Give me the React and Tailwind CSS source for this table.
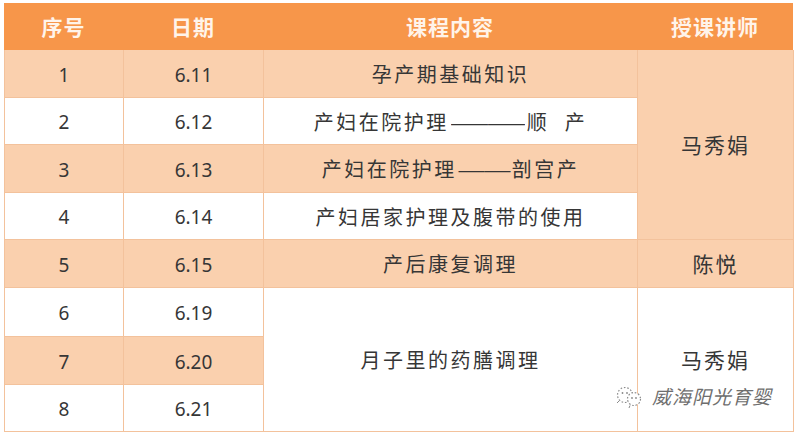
import React from "react";

const rows = [
  { n: "1", d: "6.11" },
  { n: "2", d: "6.12" },
  { n: "3", d: "6.13" },
  { n: "4", d: "6.14" },
  { n: "5", d: "6.15" },
  { n: "6", d: "6.19" },
  { n: "7", d: "6.20" },
  { n: "8", d: "6.21" },
];

const rowStart = [
  "row-start-1",
  "row-start-2",
  "row-start-3",
  "row-start-4",
  "row-start-5",
  "row-start-6",
  "row-start-7",
  "row-start-8",
];

const cellBase =
  "flex items-center justify-center pt-[3px] border-r border-b border-[#f3c29c] text-[#363636]";
const course = "text-[20px] tracking-[2.5px]";
const teacher = "text-[21px] tracking-[2px]";

function bg(i) {
  return i % 2 === 0 ? "bg-[#fad0ae]" : "bg-white";
}

function Logo() {
  return (
    <svg width="32" height="24" viewBox="0 0 32 24" fill="none">
      <circle cx="11" cy="10" r="7.5" stroke="#8a8a8a" strokeWidth="1.2" strokeDasharray="1.6 1.8" />
      <circle cx="20" cy="14" r="6.5" stroke="#8a8a8a" strokeWidth="1.2" strokeDasharray="1.6 1.8" fill="white" />
      <circle cx="18" cy="13" r="0.9" fill="#8a8a8a" />
      <circle cx="22" cy="13" r="0.9" fill="#8a8a8a" />
      <circle cx="8.5" cy="8" r="0.9" fill="#8a8a8a" />
      <circle cx="13" cy="8" r="0.9" fill="#8a8a8a" />
      <path d="M16 20.5 L15 23" stroke="#8a8a8a" strokeWidth="1" />
      <path d="M5 16 L3 18" stroke="#8a8a8a" strokeWidth="1" />
    </svg>
  );
}

export default function App() {
  return (
    <div className="w-[800px] h-[435px] bg-white pt-[3px] pl-[4px] font-['Noto_Sans','Noto_Sans_CJK_SC',sans-serif]">
      <div className="relative w-[789px]">
        {/* header */}
        <div className="grid grid-cols-[119px_140px_374px_156px] h-[47px] bg-[#f7964a] text-[#fff4ea] text-[21px] font-semibold tracking-[1px] font-['Noto_Sans_CJK_SC',sans-serif]">
          <div className="flex items-center justify-center">序号</div>
          <div className="flex items-center justify-center">日期</div>
          <div className="flex items-center justify-center">课程内容</div>
          <div className="flex items-center justify-center">授课讲师</div>
        </div>
        {/* body */}
        <div className="grid grid-cols-[119px_140px_374px_156px] grid-rows-[48px_47px_48px_47px_48px_49px_48px_47px] border-l border-[#f3c29c]">
          {rows.map((r, i) => (
            <React.Fragment key={r.n}>
              <div className={`${cellBase} ${bg(i)} ${rowStart[i]} col-start-1 text-[19px]`}>{r.n}</div>
              <div className={`${cellBase} ${bg(i)} ${rowStart[i]} col-start-2 text-[19px]`}>{r.d}</div>
            </React.Fragment>
          ))}
          <div className={`${cellBase} bg-[#fad0ae] row-start-1 col-start-3 ${course}`}>孕产期基础知识</div>
          <div className={`${cellBase} bg-white row-start-2 col-start-3 ${course}`}>
            产妇在院护理
            <span className="inline-block w-[78px] text-center tracking-[0px] scale-x-[1.85] font-['Liberation_Sans',sans-serif]">——</span>
            顺&nbsp;&nbsp;产
          </div>
          <div className={`${cellBase} bg-[#fad0ae] row-start-3 col-start-3 ${course}`}>
            产妇在院护理
            <span className="inline-block w-[55px] text-center tracking-[0px] scale-x-[1.3] font-['Liberation_Sans',sans-serif]">——</span>
            剖宫产
          </div>
          <div className={`${cellBase} bg-white row-start-4 col-start-3 ${course}`}>产妇居家护理及腹带的使用</div>
          <div className={`${cellBase} bg-[#fad0ae] row-start-5 col-start-3 ${course}`}>产后康复调理</div>
          <div className={`${cellBase} bg-white row-start-6 row-span-3 col-start-3 ${course}`}>月子里的药膳调理</div>
          <div className={`${cellBase} bg-[#fad0ae] row-start-1 row-span-4 col-start-4 ${teacher}`}>马秀娟</div>
          <div className={`${cellBase} bg-[#fad0ae] row-start-5 col-start-4 ${teacher}`}>陈悦</div>
          <div className={`${cellBase} bg-white row-start-6 row-span-3 col-start-4 ${teacher}`}>马秀娟</div>
        </div>
        {/* watermark */}
        <div className="absolute left-[610px] top-[382px] flex items-center gap-[6px]">
          <Logo />
          <span className="text-[19px] text-[#6e6e6e] italic leading-none tracking-[1px]">威海阳光育婴</span>
        </div>
      </div>
    </div>
  );
}
